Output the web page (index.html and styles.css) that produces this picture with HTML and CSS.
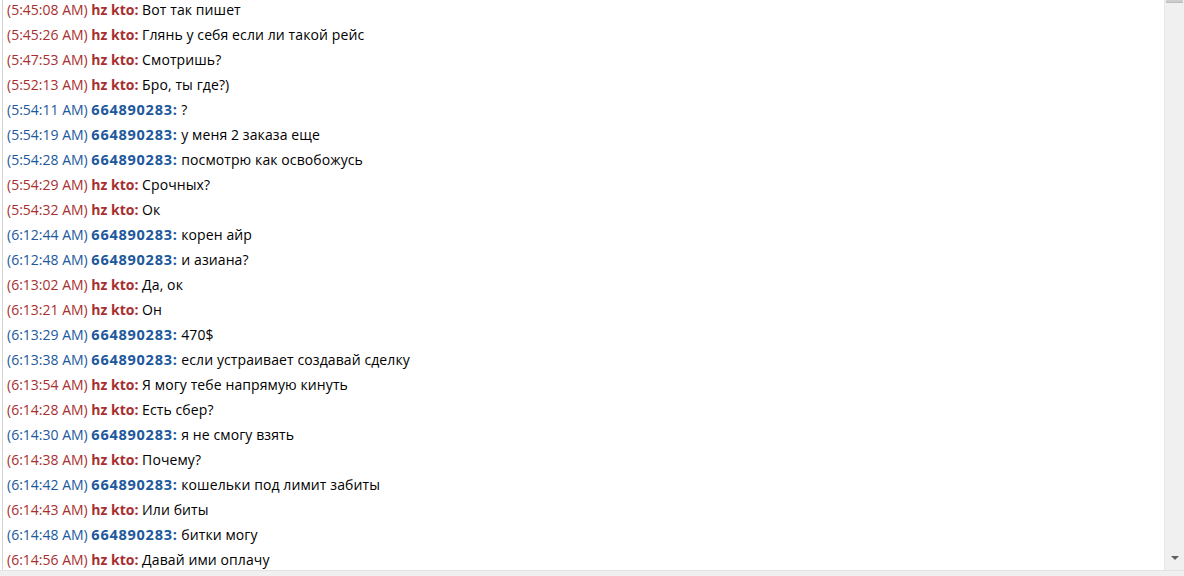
FILE: index.html
```html
<!DOCTYPE html>
<html>
<head>
<meta charset="utf-8">
<link rel="stylesheet" href="styles.css">
</head>
<body>
<div class="window">
  <div class="log">
    <div class="lines">
      <div class="row in"><span class="ts">(5:45:08 AM)</span> <b>hz kto:</b> <span class="msg">Вот так пишет</span></div>
      <div class="row in"><span class="ts">(5:45:26 AM)</span> <b>hz kto:</b> <span class="msg">Глянь у себя если ли такой рейс</span></div>
      <div class="row in"><span class="ts">(5:47:53 AM)</span> <b>hz kto:</b> <span class="msg">Смотришь?</span></div>
      <div class="row in"><span class="ts">(5:52:13 AM)</span> <b>hz kto:</b> <span class="msg">Бро, ты где?)</span></div>
      <div class="row out"><span class="ts">(5:54:11 AM)</span> <b>664890283:</b> <span class="msg">?</span></div>
      <div class="row out"><span class="ts">(5:54:19 AM)</span> <b>664890283:</b> <span class="msg">у меня 2 заказа еще</span></div>
      <div class="row out"><span class="ts">(5:54:28 AM)</span> <b>664890283:</b> <span class="msg">посмотрю как освобожусь</span></div>
      <div class="row in"><span class="ts">(5:54:29 AM)</span> <b>hz kto:</b> <span class="msg">Срочных?</span></div>
      <div class="row in"><span class="ts">(5:54:32 AM)</span> <b>hz kto:</b> <span class="msg">Ок</span></div>
      <div class="row out"><span class="ts">(6:12:44 AM)</span> <b>664890283:</b> <span class="msg">корен айр</span></div>
      <div class="row out"><span class="ts">(6:12:48 AM)</span> <b>664890283:</b> <span class="msg">и азиана?</span></div>
      <div class="row in"><span class="ts">(6:13:02 AM)</span> <b>hz kto:</b> <span class="msg">Да, ок</span></div>
      <div class="row in"><span class="ts">(6:13:21 AM)</span> <b>hz kto:</b> <span class="msg">Он</span></div>
      <div class="row out"><span class="ts">(6:13:29 AM)</span> <b>664890283:</b> <span class="msg">470$</span></div>
      <div class="row out"><span class="ts">(6:13:38 AM)</span> <b>664890283:</b> <span class="msg">если устраивает создавай сделку</span></div>
      <div class="row in"><span class="ts">(6:13:54 AM)</span> <b>hz kto:</b> <span class="msg">Я могу тебе напрямую кинуть</span></div>
      <div class="row in"><span class="ts">(6:14:28 AM)</span> <b>hz kto:</b> <span class="msg">Есть сбер?</span></div>
      <div class="row out"><span class="ts">(6:14:30 AM)</span> <b>664890283:</b> <span class="msg">я не смогу взять</span></div>
      <div class="row in"><span class="ts">(6:14:38 AM)</span> <b>hz kto:</b> <span class="msg">Почему?</span></div>
      <div class="row out"><span class="ts">(6:14:42 AM)</span> <b>664890283:</b> <span class="msg">кошельки под лимит забиты</span></div>
      <div class="row in"><span class="ts">(6:14:43 AM)</span> <b>hz kto:</b> <span class="msg">Или биты</span></div>
      <div class="row out"><span class="ts">(6:14:48 AM)</span> <b>664890283:</b> <span class="msg">битки могу</span></div>
      <div class="row in"><span class="ts">(6:14:56 AM)</span> <b>hz kto:</b> <span class="msg">Давай ими оплачу</span></div>
    </div>
  </div>
  <div class="scrollbar">
    <div class="thumb"></div>
    <div class="track"></div>
    <div class="arrow"></div>
  </div>
</div>
<div class="bottom"></div>
</body>
</html>
```
FILE: styles.css
```css
html, body {
  margin: 0;
  padding: 0;
  background: #ffffff;
  overflow: hidden;
}
body {
  width: 1184px;
  height: 576px;
  font-family: "Open Sans", "Noto Sans", sans-serif;
}
.window {
  display: flex;
  height: 570px;
}
.log {
  flex: 1;
  border-left: 1px solid #d4d4d4;
  margin-left: 2px;
  overflow: hidden;
  background: #fff;
}
.lines {
  margin-top: -3px;
  padding-left: 4px;
}
.row {
  height: 25px;
  line-height: 25px;
  font-size: 14px;
  white-space: nowrap;
  color: #000;
}
.row .ts { font-weight: normal; }
.row b { font-weight: 700; }
.out b { letter-spacing: 0.75px; font-size: 14.5px; }
.row .msg { color: #000; letter-spacing: 0.1px; }
.in .ts, .in b { color: #a82f2f; }
.out .ts, .out b { color: #20589c; }
.scrollbar {
  width: 19px;
  border-left: 1px solid #e6e6e6;
  background: #f0f0f0;
  display: flex;
  flex-direction: column;
  align-items: center;
}
.thumb {
  width: 17px;
  height: 2px;
  background: #cdcdcd;
  border-bottom: 1px solid #bdbdbd;
}
.track { flex: 1; }
.arrow {
  width: 0;
  height: 0;
  border-left: 4px solid transparent;
  border-right: 4px solid transparent;
  border-top: 4px solid #606060;
  margin-bottom: 10px;
}
.bottom {
  height: 5px;
  border-top: 1px solid #e3e3e3;
  background: #f0f0f0;
}
```
